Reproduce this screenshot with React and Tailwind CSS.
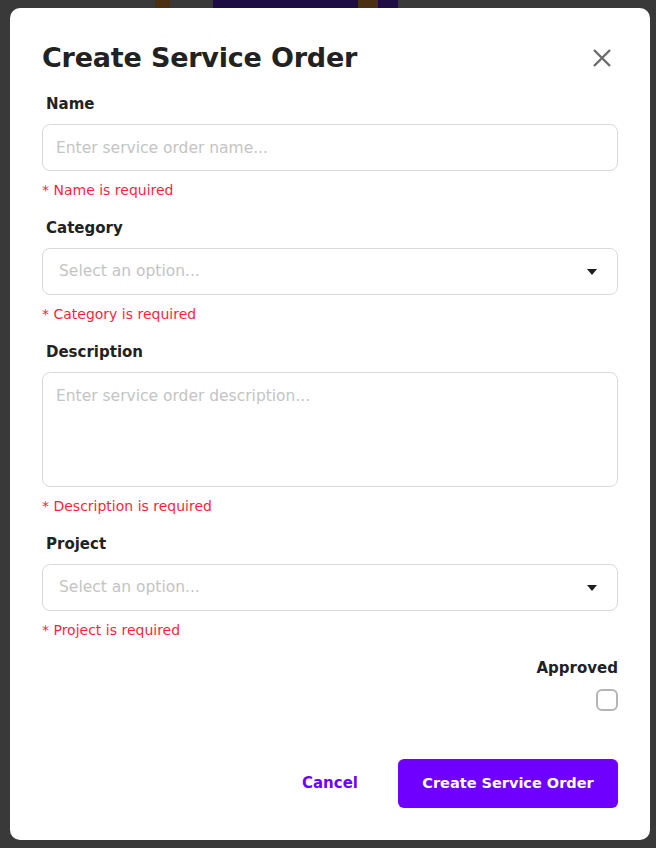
import React from 'react'

const font = { fontFamily: '"DejaVu Sans", "Open Sans", sans-serif' }

function Caret() {
  return (
    <svg width="10" height="6" viewBox="0 0 10 6" className="shrink-0">
      <path d="M0 0h10L5 6z" fill="#1f1f1f" />
    </svg>
  )
}

function Field({ label, error, children }) {
  return (
    <div className="flex flex-col">
      <label className="ml-[4px] mb-[11px] text-[15px] leading-[18px] font-semibold text-[#222]">{label}</label>
      {children}
      <p className="mt-[10px] text-[14px] leading-[18px] text-[#ff1f3d]">* {error}</p>
    </div>
  )
}

function SelectBox() {
  return (
    <div className="h-[47px] rounded-[8px] border border-[#d9d9d9] flex items-center justify-between pl-[16px] pr-[20px]">
      <span className="text-[15.5px] text-[#c4c4c4]">Select an option...</span>
      <Caret />
    </div>
  )
}

export default function App() {
  return (
    <div className="w-[656px] h-[848px] bg-[#393939] flex flex-col" style={font}>
      {/* app behind the overlay */}
      <div className="h-[8px] flex">
        <div className="w-[155px]" />
        <div className="w-[15px] bg-[#4a2f12]" />
        <div className="w-[43px]" />
        <div className="w-[145px] bg-[#1e0c44]" />
        <div className="w-[20px] bg-[#4a2f12]" />
        <div className="w-[20px] bg-[#1e0c44]" />
      </div>
      <div className="ml-[10px] w-[640px] h-[832px] bg-white rounded-[10px] px-[32px] pt-[34px] flex flex-col">
        <div className="flex items-start justify-between">
          <h1 className="text-[27px] leading-[32px] font-semibold text-[#222] tracking-[-0.2px]">Create Service Order</h1>
          <button className="mt-[6px] mr-[6px] text-[#6b6b6b]">
            <svg width="20" height="20" viewBox="0 0 20 20">
              <path d="M2 2L18 18M18 2L2 18" stroke="currentColor" strokeWidth="2.4" />
            </svg>
          </button>
        </div>

        <div className="mt-[21px] flex flex-col gap-[20px]">
          <Field label="Name" error="Name is required">
            <input
              placeholder="Enter service order name..."
              className="h-[47px] rounded-[8px] border border-[#d9d9d9] px-[13px] text-[15.5px] placeholder:text-[#c4c4c4] outline-none"
            />
          </Field>
          <Field label="Category" error="Category is required">
            <SelectBox />
          </Field>
          <Field label="Description" error="Description is required">
            <textarea
              placeholder="Enter service order description..."
              className="h-[115px] rounded-[8px] border border-[#d9d9d9] px-[13px] py-[12px] text-[15.5px] placeholder:text-[#c4c4c4] outline-none resize-none"
            />
          </Field>
          <Field label="Project" error="Project is required">
            <SelectBox />
          </Field>
        </div>

        <div className="mt-[20px] flex flex-col items-end">
          <span className="text-[15px] leading-[18px] font-semibold text-[#222]">Approved</span>
          <div className="mt-[12px] w-[22px] h-[22px] rounded-[6px] border-2 border-[#b5b5b5]" />
        </div>

        <div className="mt-[48px] flex items-center justify-end gap-[40px]">
          <button className="text-[15px] font-semibold text-[#6f00ff]">Cancel</button>
          <button className="h-[49px] w-[220px] rounded-[6px] bg-[#6f00ff] text-white text-[14.5px] font-semibold">
            Create Service Order
          </button>
        </div>
      </div>
    </div>
  )
}
